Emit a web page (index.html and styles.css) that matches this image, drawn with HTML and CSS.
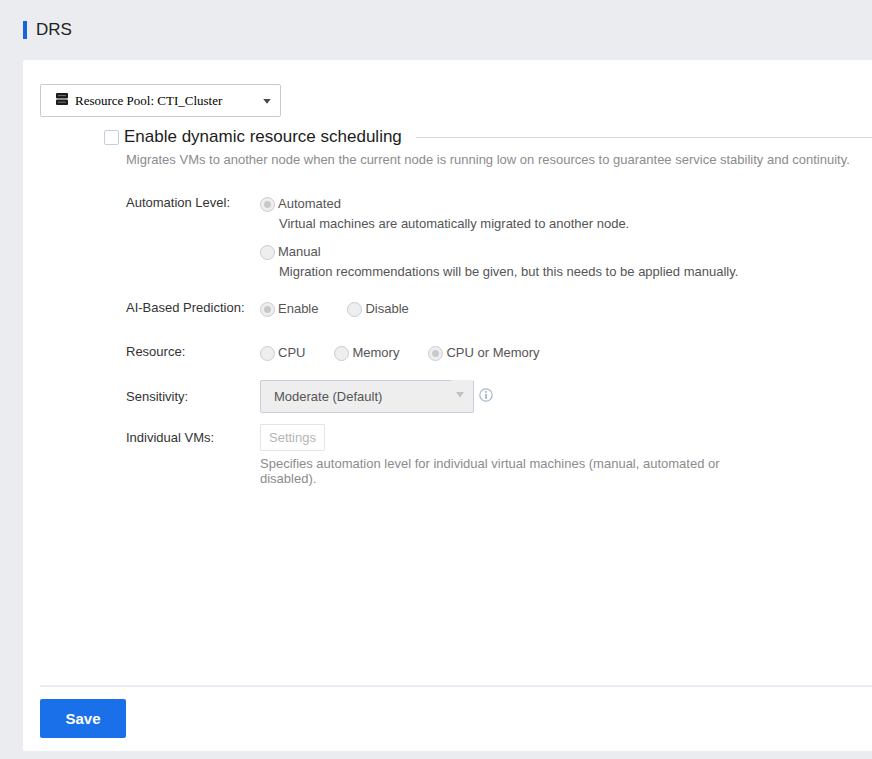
FILE: index.html
```html
<!DOCTYPE html>
<html lang="en">
<head>
<meta charset="utf-8">
<meta name="viewport" content="width=device-width, initial-scale=1">
<title>DRS</title>
<link rel="stylesheet" href="styles.css">
</head>
<body>
<header class="page-header">
  <h1 class="page-title">DRS</h1>
</header>
<form class="panel">
  <div class="pool">
    <svg class="pool-icon" viewBox="0 0 12 12" aria-hidden="true">
      <rect x="0" y="0" width="12" height="5.6" rx="1" fill="#1c1c1c"/>
      <rect x="0" y="6.4" width="12" height="5.6" rx="1" fill="#1c1c1c"/>
      <path d="M2 2.6h8M2 9.2h8" stroke="#777" stroke-width="1"/>
    </svg>
    <select class="pool-select" aria-label="Resource pool">
      <option>Resource Pool: CTI_Cluster</option>
    </select>
    <svg class="pool-arrow" viewBox="0 0 8 5" aria-hidden="true"><path d="M0.2 0h7.6L4 4.8z" fill="#444a52"/></svg>
  </div>

  <section class="settings">
    <div class="section-head">
      <label class="section-toggle"><input class="checkbox" type="checkbox">Enable dynamic resource scheduling</label>
    </div>
    <p class="section-note">Migrates VMs to another node when the current node is running low on resources to guarantee service stability and continuity.</p>

    <div class="row automation" role="radiogroup" aria-labelledby="automation-label">
      <span class="row-label" id="automation-label">Automation Level:</span>
      <div class="stack">
        <div class="choice">
          <label class="option"><input class="radio" type="radio" name="automation" checked disabled>Automated</label>
          <p class="option-note">Virtual machines are automatically migrated to another node.</p>
        </div>
        <div class="choice">
          <label class="option"><input class="radio" type="radio" name="automation" disabled>Manual</label>
          <p class="option-note">Migration recommendations will be given, but this needs to be applied manually.</p>
        </div>
      </div>
    </div>

    <div class="row prediction" role="radiogroup" aria-labelledby="prediction-label">
      <span class="row-label" id="prediction-label">AI-Based Prediction:</span>
      <div class="options">
        <label class="option"><input class="radio" type="radio" name="prediction" checked disabled>Enable</label>
        <label class="option"><input class="radio" type="radio" name="prediction" disabled>Disable</label>
      </div>
    </div>

    <div class="row resource" role="radiogroup" aria-labelledby="resource-label">
      <span class="row-label" id="resource-label">Resource:</span>
      <div class="options">
        <label class="option"><input class="radio" type="radio" name="resource" disabled>CPU</label>
        <label class="option"><input class="radio" type="radio" name="resource" disabled>Memory</label>
        <label class="option"><input class="radio" type="radio" name="resource" checked disabled>CPU or Memory</label>
      </div>
    </div>

    <div class="row sensitivity">
      <label class="row-label" for="sensitivity">Sensitivity:</label>
      <div class="select-line">
        <div class="level">
          <select class="level-select" id="sensitivity" disabled>
            <option>Moderate (Default)</option>
          </select>
          <svg class="level-arrow" viewBox="0 0 22 20" aria-hidden="true">
            <rect width="22" height="20" fill="#eee"/>
            <path d="M5 12h8l-4 5.5z" fill="#bfc1c4"/>
          </svg>
        </div>
        <svg class="info" viewBox="0 0 14 14" aria-hidden="true">
          <circle cx="7" cy="7" r="6.2" fill="none" stroke="#a3bac8" stroke-width="1.2"/>
          <path d="M7 3v1.8M7 6v4.8" stroke="#8fb0c4" stroke-width="1.6"/>
        </svg>
      </div>
    </div>

    <div class="row individual">
      <span class="row-label">Individual VMs:</span>
      <div class="individual-body">
        <button class="settings-button" type="button" disabled>Settings</button>
        <p class="individual-note">Specifies automation level for individual virtual machines (manual, automated or disabled).</p>
      </div>
    </div>
  </section>

  <footer class="actions">
    <button class="save" type="submit">Save</button>
  </footer>
</form>
</body>
</html>
```

FILE: styles.css
```css
* {
  box-sizing: border-box;
}

body {
  display: flex;
  flex-direction: column;
  min-height: 100vh;
  margin: 0;
  padding: 0 0 8px 23px;
  background: #ebecf0;
  color: #333;
  font: 13px/16px "Liberation Sans", Arial, sans-serif;
}

h1,
p {
  margin: 0;
  font-weight: normal;
}

button,
select,
input {
  margin: 0;
  font: inherit;
}

.page-header {
  display: flex;
  align-items: center;
  height: 60px;
}

.page-title {
  padding-left: 9px;
  border-left: 4px solid #1664d9;
  color: #222;
  font-size: 17px;
  line-height: 18px;
}

.panel {
  display: flex;
  flex: 1;
  flex-direction: column;
  padding: 24px 0 13px 17px;
  border-radius: 2px 0 0 2px;
  background: #fff;
}

.pool {
  position: relative;
  width: 241px;
}

.pool-select {
  display: block;
  width: 100%;
  height: 33px;
  padding: 0 30px 0 34px;
  border: 1px solid #c5cad5;
  border-radius: 2px;
  background: #fff;
  color: #000;
  font: 13px "Liberation Serif", "Times New Roman", serif;
  appearance: none;
}

.pool-icon {
  position: absolute;
  top: 9px;
  left: 16px;
  width: 12px;
  height: 12px;
}

.pool-arrow {
  position: absolute;
  top: 15px;
  right: 10px;
  width: 8px;
  height: 5px;
}

.settings {
  flex: 1;
  padding-left: 86px;
}

.section-head {
  display: flex;
  align-items: center;
  gap: 14px;
  margin: 10px 0 5px -22px;
}

.section-head::after {
  flex: 1;
  height: 1px;
  background: #d5dae5;
  content: "";
}

.section-toggle {
  display: flex;
  align-items: center;
  gap: 5px;
  color: #1c1c1c;
  font-size: 17px;
  line-height: 20px;
}

.checkbox {
  width: 15px;
  height: 15px;
  border: 1px solid #c8cdd9;
  border-radius: 2px;
  background: #fff;
  appearance: none;
}

.checkbox:checked {
  background: #1a6fe8;
}

.section-note,
.individual-note {
  color: #8c8c8c;
}

.row {
  display: grid;
  grid-template-columns: 134px 1fr;
}

.automation {
  margin-top: 27px;
}

.prediction {
  margin-top: 20px;
}

.resource {
  margin-top: 27px;
}

.sensitivity {
  align-items: center;
  margin-top: 19px;
}

.individual {
  margin-top: 11px;
}

.individual .row-label {
  padding-top: 6px;
}

.stack {
  display: flex;
  flex-direction: column;
  gap: 12px;
  padding-top: 1px;
}

.options {
  display: flex;
  gap: 29px;
  padding-top: 1px;
}

.option {
  display: flex;
  align-items: center;
  gap: 3px;
  color: #555;
}

.option-note {
  margin-top: 4px;
  padding-left: 19px;
  color: #555;
}

.radio {
  width: 15px;
  height: 15px;
  border: 1px solid #c8ccd4;
  border-radius: 50%;
  background: #eee;
  appearance: none;
}

.radio:checked {
  background: radial-gradient(circle, #c8c8c8 3px, #eee 4px);
}

.select-line {
  display: flex;
  align-items: flex-start;
  gap: 5px;
}

.level {
  position: relative;
  width: 214px;
}

.level-select {
  display: block;
  width: 100%;
  height: 33px;
  padding: 0 30px 0 13px;
  border: 1px solid #c9cedb;
  border-radius: 2px;
  background: #eee;
  color: #555;
  opacity: 1;
  appearance: none;
}

.level-arrow {
  position: absolute;
  top: 0;
  right: 1px;
  width: 22px;
  height: 20px;
}

.info {
  width: 14px;
  height: 14px;
  margin-top: 8px;
}

.settings-button {
  display: block;
  height: 27px;
  padding: 0 8px;
  border: 1px solid #e2e4ea;
  border-radius: 1px;
  background: #fff;
  color: #b5b5b5;
}

.individual-note {
  max-width: 480px;
  margin-top: 5px;
  line-height: 15px;
}

.actions {
  padding-top: 12px;
  border-top: 2px solid #e9edf4;
}

.save {
  display: block;
  min-width: 86px;
  height: 39px;
  border: 0;
  border-radius: 2px;
  background: #1a70e8;
  color: #fff;
  font-size: 15px;
  font-weight: bold;
}
```
